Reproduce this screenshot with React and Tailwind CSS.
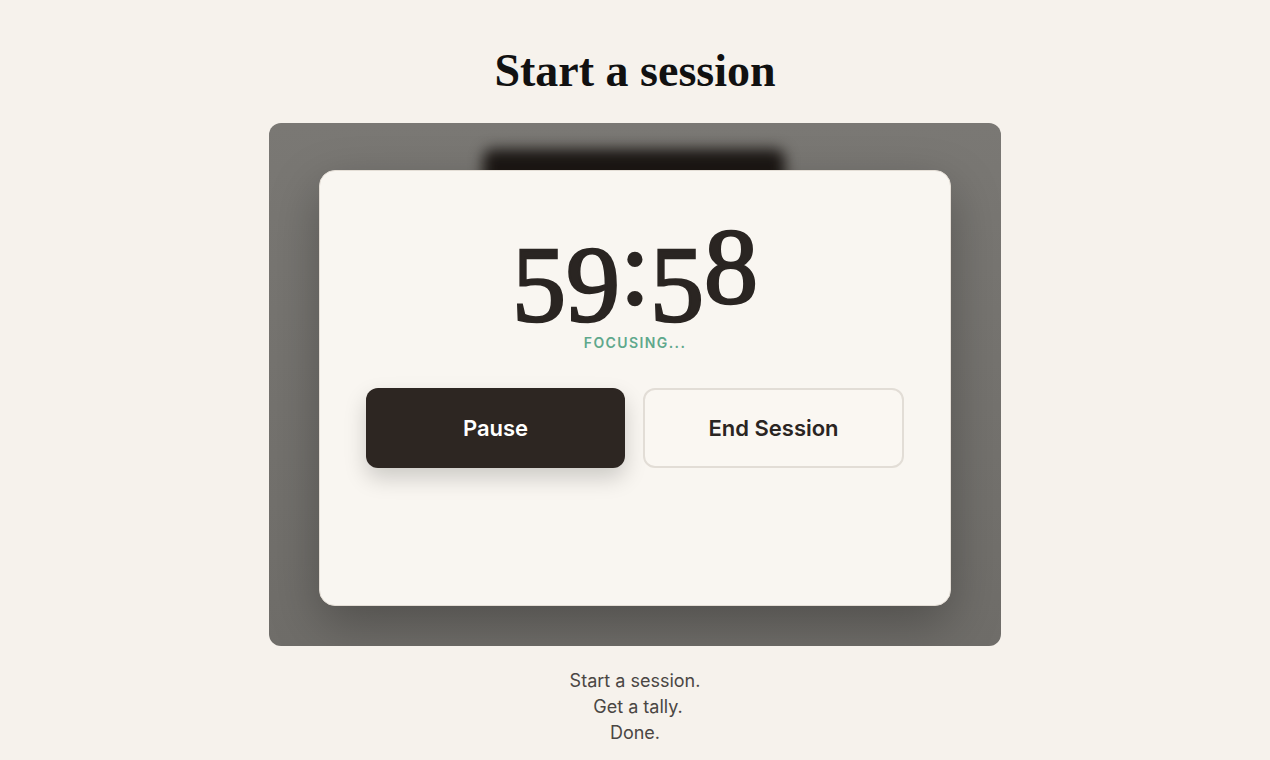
import React from 'react';

const serif = { fontFamily: '"Liberation Serif", "Times New Roman", serif' };

// oldstyle-looking digits: 5 and 9 sit lower than the 8
const Digit = ({ children, low }) => (
  <span className={low ? "inline-block leading-[80px] translate-y-[18px]" : "inline-block leading-[80px]"}>{children}</span>
);

const App = () => {
  return (
    <div className="min-h-screen bg-[#f6f2ec] flex flex-col items-center font-['Inter',sans-serif]">
      <h1 className="mt-[48px] text-[46px] leading-none font-bold text-[#111] font-['Liberation_Serif',serif]">
        Start a session
      </h1>

      <div className="relative mt-[29px] w-[732px] h-[523px] rounded-[12px] bg-gradient-to-b from-[#7a7874] to-[#6f6d69] pt-[47px] px-[50px] pb-[40px] overflow-hidden">
        {/* dark blurred shape peeking above the window */}
        <div className="absolute left-[214px] top-[26px] w-[302px] h-[44px] rounded-[10px] bg-[#1c1714] blur-[7px]"></div>

        <div className="relative h-full rounded-[16px] bg-[#f9f6f1] border border-[#e4ded6] shadow-[0_18px_50px_rgba(0,0,0,0.28)] flex flex-col items-center">
          <div className="mt-[42px] h-[108px] text-[108px] leading-none text-[#2a2522] [-webkit-text-stroke-width:2.5px] [-webkit-text-stroke-color:#2a2522]" style={serif}>
            <Digit low>5</Digit>
            <Digit low>9</Digit>
            <Digit>:</Digit>
            <Digit low>5</Digit>
            <Digit>8</Digit>
          </div>

          <div className="mt-[12px] text-[14px] leading-5 font-semibold tracking-[0.1em] text-[#5fa88c]">
            FOCUSING...
          </div>

          <div className="mt-[35px] flex gap-[18px]">
            <button className="w-[259px] h-[80px] rounded-[12px] bg-[#2d2622] text-white text-[22px] font-semibold shadow-[0_10px_22px_rgba(0,0,0,0.18)]">
              Pause
            </button>
            <button className="w-[261px] h-[80px] rounded-[12px] bg-[#faf7f2] border-2 border-[#e2ddd6] text-[#2a2522] text-[22px] font-semibold">
              End Session
            </button>
          </div>
        </div>
      </div>

      <div className="mt-[22px] text-[18px] leading-[26px] text-[#4a4643] text-center">
        <p>Start a session.</p>
        <p className="pl-[6px]">Get a tally.</p>
        <p>Done.</p>
      </div>
    </div>
  );
};

export default App;
